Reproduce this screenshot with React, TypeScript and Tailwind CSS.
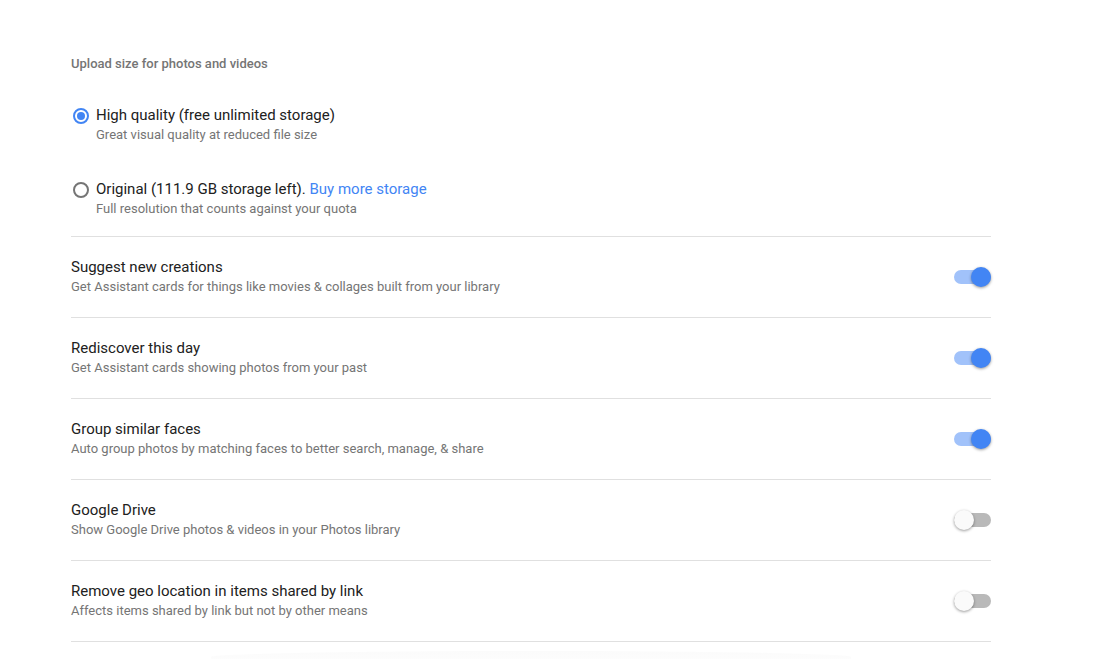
import React, { useState } from 'react'

const toggles = [
  {
    title: 'Suggest new creations',
    description: 'Get Assistant cards for things like movies & collages built from your library',
    on: true
  },
  {
    title: 'Rediscover this day',
    description: 'Get Assistant cards showing photos from your past',
    on: true
  },
  {
    title: 'Group similar faces',
    description: 'Auto group photos by matching faces to better search, manage, & share',
    on: true
  },
  {
    title: 'Google Drive',
    description: 'Show Google Drive photos & videos in your Photos library',
    on: false
  },
  {
    title: 'Remove geo location in items shared by link',
    description: 'Affects items shared by link but not by other means',
    on: false
  }
]

function Radio({ checked }: { checked: boolean }) {
  return (
    <div
      className={`w-[16px] h-[16px] rounded-full border-2 flex items-center justify-center shrink-0 ${
        checked ? 'border-[#4285f4]' : 'border-[#757575]'
      }`}
    >
      {checked && <div className="w-[8px] h-[8px] rounded-full bg-[#4285f4]" />}
    </div>
  )
}

function Toggle({ on, onClick }: { on: boolean; onClick: () => void }) {
  return (
    <button onClick={onClick} className="relative w-[38px] h-[20px] shrink-0">
      <div
        className={`absolute left-[1px] right-0 top-[3px] h-[14px] rounded-full ${
          on ? 'bg-[#a1c2fa]' : 'bg-[#b9b9b9]'
        }`}
      />
      <div
        className={`absolute top-0 w-[20px] h-[20px] rounded-full shadow-[0_1px_3px_rgba(0,0,0,0.4)] ${
          on ? 'right-0 bg-[#4285f4]' : 'left-[1px] bg-[#fafafa]'
        }`}
      />
    </button>
  )
}

export default function App() {
  const [quality, setQuality] = useState('high')
  const [state, setState] = useState(toggles.map((t) => t.on))

  return (
    <div
      className="min-h-screen bg-white overflow-hidden"
      style={{ fontFamily: 'Roboto, "Liberation Sans", sans-serif' }}
    >
      <div className="w-[920px] ml-[71px] pt-[56px]">
        {/* Upload size */}
        <div className="pb-[18px] border-b border-[#e0e0e0]">
          <p className="text-[13px] leading-[16px] font-medium text-[#757575]">
            Upload size for photos and videos
          </p>

          <div className="mt-[33px] flex gap-[7px] cursor-pointer" onClick={() => setQuality('high')}>
            <div className="pl-[2px] pt-[3px]">
              <Radio checked={quality === 'high'} />
            </div>
            <div>
              <p className="text-[15px] leading-[20px] text-[#212121]">High quality (free unlimited storage)</p>
              <p className="mt-[1px] text-[13px] leading-[18px] text-[#757575]">Great visual quality at reduced file size</p>
            </div>
          </div>

          <div className="mt-[35px] flex gap-[7px] cursor-pointer" onClick={() => setQuality('original')}>
            <div className="pl-[2px] pt-[3px]">
              <Radio checked={quality === 'original'} />
            </div>
            <div>
              <p className="text-[15px] leading-[20px] text-[#212121]">
                Original (111.9 GB storage left).{' '}
                <span className="text-[#4285f4]">Buy more storage</span>
              </p>
              <p className="mt-[1px] text-[13px] leading-[18px] text-[#757575]">Full resolution that counts against your quota</p>
            </div>
          </div>
        </div>

        {/* Toggles */}
        {toggles.map((item, index) => (
          <div
            key={item.title}
            className="flex items-center justify-between pt-[20px] pb-[21px] border-b border-[#e0e0e0]"
          >
            <div>
              <p className="text-[15px] leading-[20px] text-[#212121]">{item.title}</p>
              <p className="mt-[1px] text-[13px] leading-[18px] text-[#757575]">{item.description}</p>
            </div>
            <Toggle
              on={state[index]}
              onClick={() => setState(state.map((v, i) => (i === index ? !v : v)))}
            />
          </div>
        ))}

        <div className="mx-[140px] mt-[9px] h-[12px] rounded-t-[50%] bg-gradient-to-b from-[#fbfbfb] to-[#fdfdfd]" />
      </div>
    </div>
  )
}
